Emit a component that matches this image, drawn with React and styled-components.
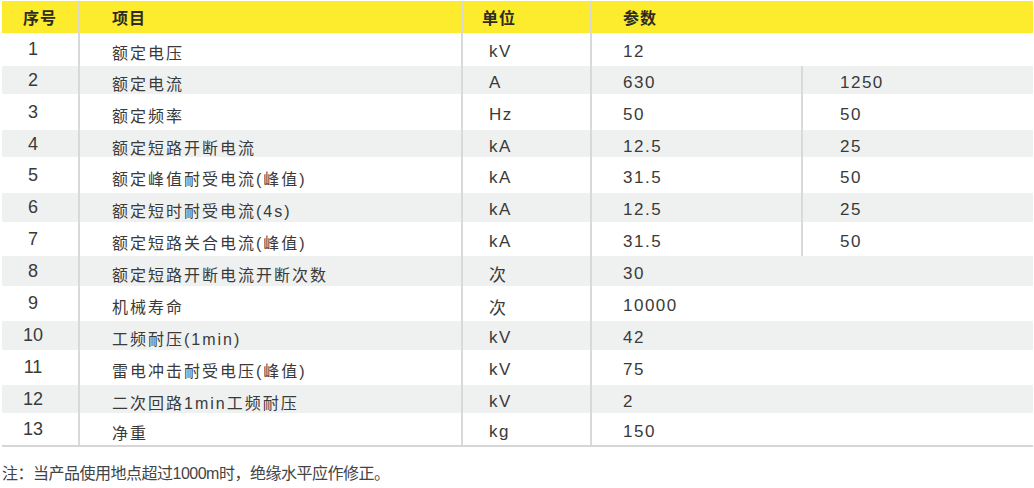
import React from "react";
import styled, { createGlobalStyle } from "styled-components";

const Global = createGlobalStyle`
  html, body { margin: 0; padding: 0; background: #ffffff; }
  body { font-family: "Liberation Sans", "Noto Sans CJK SC", sans-serif; color: #3a3a3a; }
`;

const Page = styled.div`
  width: 1034px;
  padding: 1px 1px 0 2px;
  box-sizing: border-box;
`;

const Table = styled.div`
  display: flex;
  flex-direction: column;
  border-bottom: 2px solid #d6d6d6;
`;

const Row = styled.div`
  display: grid;
  grid-template-columns: 78px 383px 129px 211px 1fr;
  height: ${(p) => p.$h}px;
  background: ${(p) => (p.$head ? "#fdec2e" : p.$alt ? "#eff1f1" : "#ffffff")};
`;

const Cell = styled.div`
  display: flex;
  align-items: center;
  box-sizing: border-box;
  border-right: ${(p) => (p.$last ? "none" : "2px solid #d9d9d9")};
  padding-left: ${(p) => p.$pl || 0}px;
  padding-top: 5px;
  grid-column: ${(p) => p.$span || "auto"};
  font-size: 16px;
  letter-spacing: 2px;
  white-space: nowrap;
`;

const ValueCell = styled(Cell)`
  font-size: 17px;
  letter-spacing: 1.5px;
`;

const NumCell = styled(Cell)`
  justify-content: center;
  padding-right: 14px;
  padding-top: 0;
  font-size: 18px;
  letter-spacing: 0;
`;

const HeadCell = styled.div`
  display: flex;
  align-items: center;
  justify-content: ${(p) => (p.$center ? "center" : "flex-start")};
  box-sizing: border-box;
  border-right: ${(p) => (p.$last ? "none" : "2px solid #d9d9d9")};
  padding-left: ${(p) => p.$pl || 0}px;
  grid-column: ${(p) => p.$span || "auto"};
  font-size: 16px;
  font-weight: bold;
  letter-spacing: 1px;
  color: #2e2b22;
`;

const Note = styled.div`
  margin-top: 15px;
  font-size: 16px;
  letter-spacing: -0.5px;
  line-height: 24px;
  color: #444444;
`;

const rows = [
  ["1", "额定电压", "kV", "12", null, 33],
  ["2", "额定电流", "A", "630", "1250", 28],
  ["3", "额定频率", "Hz", "50", "50", 36],
  ["4", "额定短路开断电流", "kA", "12.5", "25", 27],
  ["5", "额定峰值耐受电流(峰值)", "kA", "31.5", "50", 36],
  ["6", "额定短时耐受电流(4s)", "kA", "12.5", "25", 29],
  ["7", "额定短路关合电流(峰值)", "kA", "31.5", "50", 34],
  ["8", "额定短路开断电流开断次数", "次", "30", null, 30],
  ["9", "机械寿命", "次", "10000", null, 35],
  ["10", "工频耐压(1min)", "kV", "42", null, 29],
  ["11", "雷电冲击耐受电压(峰值)", "kV", "75", null, 35],
  ["12", "二次回路1min工频耐压", "kV", "2", null, 28],
  ["13", "净重", "kg", "150", null, 32],
];

export default function App() {
  return (
    <Page>
      <Global />
      <Table>
        <Row $head $h={32}>
          <HeadCell $center>序号</HeadCell>
          <HeadCell $pl={32}>项目</HeadCell>
          <HeadCell $pl={19}>单位</HeadCell>
          <HeadCell $pl={31} $span="4 / 6" $last>
            参数
          </HeadCell>
        </Row>
        {rows.map(([n, item, unit, a, b, h], i) => (
          <Row key={n} $alt={i % 2 === 1} $h={h}>
            <NumCell>{n}</NumCell>
            <Cell $pl={32}>{item}</Cell>
            <ValueCell $pl={26}>{unit}</ValueCell>
            {b === null ? (
              <ValueCell $pl={31} $span="4 / 6" $last>
                {a}
              </ValueCell>
            ) : (
              <>
                <ValueCell $pl={31}>{a}</ValueCell>
                <ValueCell $pl={37} $last>
                  {b}
                </ValueCell>
              </>
            )}
          </Row>
        ))}
      </Table>
      <Note>注：当产品使用地点超过1000m时，绝缘水平应作修正。</Note>
    </Page>
  );
}
